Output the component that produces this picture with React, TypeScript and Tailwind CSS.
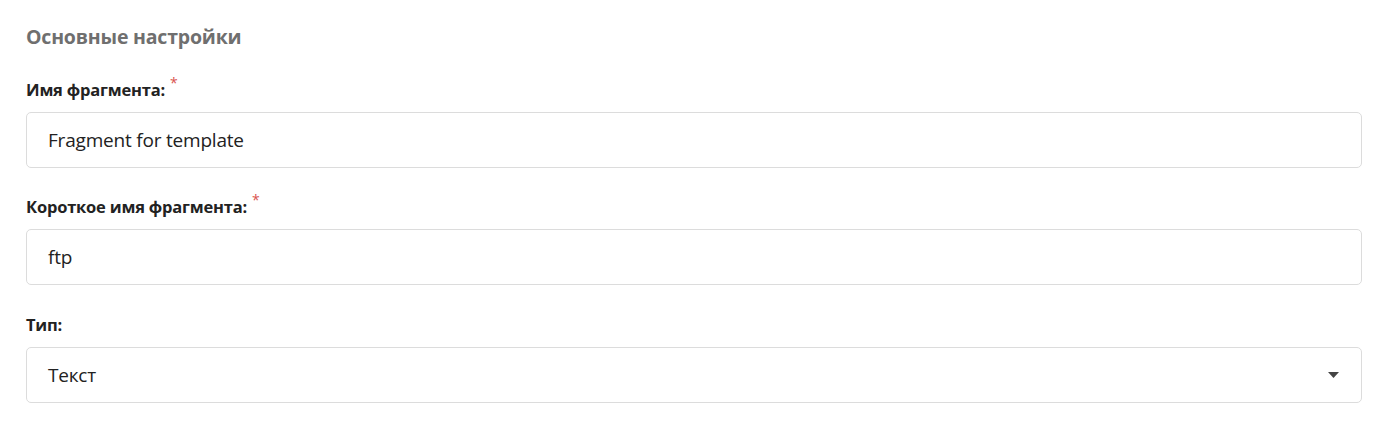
const font = { fontFamily: '"Open Sans", "Liberation Sans", sans-serif' }

function Label({ text, required }: { text: string; required?: boolean }) {
  return (
    <label className="flex h-6 items-center text-[16.5px] font-bold leading-6 tracking-[-0.2px] text-[#222]">
      {text}
      {required ? (
        <span className="relative -top-[7px] ml-[5px] text-[14px] font-normal text-[#d9534f]">*</span>
      ) : null}
    </label>
  )
}

function Field({ label, value, required, select }: { label: string; value: string; required?: boolean; select?: boolean }) {
  return (
    <div className={select ? "mt-px flex flex-col gap-[10px]" : "flex flex-col gap-[10px]"}>
      <Label text={label} required={required} />
      <div className="flex h-[56px] items-center justify-between rounded-[5px] border border-[#dcdcdc] bg-white pl-[21px] pr-[22px] text-[19px] text-[#222]">
        <span className="tracking-[-0.2px]">{value}</span>
        {select ? (
          <svg width="11" height="6" viewBox="0 0 11 6" className="fill-[#444]">
            <path d="M0 0 L11 0 L5.5 6 Z" />
          </svg>
        ) : null}
      </div>
    </div>
  )
}

export default function App() {
  return (
    <div className="min-h-[426px] bg-white pl-[26px] pr-[29px] pt-[23px]" style={font}>
      <h2 className="h-[27px] text-[19.5px] font-bold leading-[27px] tracking-[-0.2px] text-[#6f6f6f]">
        Основные настройки
      </h2>
      <div className="mt-[28px] flex flex-col gap-[27px]">
        <Field label="Имя фрагмента:" value="Fragment for template" required />
        <Field label="Короткое имя фрагмента:" value="ftp" required />
        <Field label="Тип:" value="Текст" select />
      </div>
    </div>
  )
}
